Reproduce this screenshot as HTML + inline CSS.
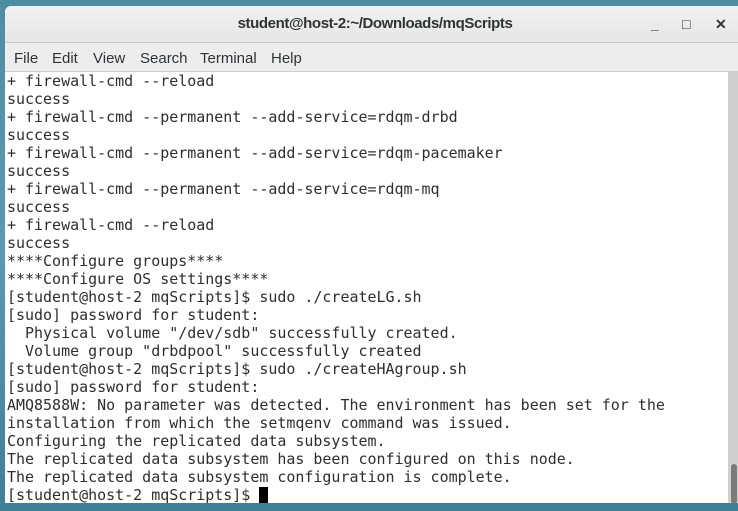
<!DOCTYPE html>
<html><head><style>
body{margin:0;width:738px;height:511px;overflow:hidden;background:linear-gradient(180deg,#4f8da3,#5a9ab0 50%,#3f7f96);font-family:"Liberation Sans",sans-serif;position:relative}
.win{position:absolute;left:5px;top:6px;width:740px;height:497px;background:#fff;border-radius:6px 6px 0 0;overflow:hidden}
.title{height:36px;background:linear-gradient(#f1f1f1,#e6e6e6);border-bottom:1px solid #c8c8c8;text-align:center;font-size:15px;line-height:36px;color:#2e3436;font-weight:bold;letter-spacing:-0.4px}
.b{position:absolute;top:0;line-height:36px;font-size:14px;color:#2e3436;font-weight:bold}
.menu{height:28px;background:#ededed;border-bottom:1px solid #d0d0d0;font-size:15px;line-height:32px;color:#2e3436;position:relative}
.menu span{position:absolute;top:0}
pre{margin:0;padding:0 0 0 2px;font-family:"DejaVu Sans Mono","Liberation Mono",monospace;font-size:14.98px;line-height:18px;color:#2e2e2e}
.sb{position:absolute;left:723px;top:65px;width:12px;height:432px;background:#cfcfcf}
.th{position:absolute;left:726px;top:458px;width:6px;height:40px;background:#7b7b7b;border-radius:3px}
.cur{display:inline-block;width:9px;height:16px;background:#000;vertical-align:-3px}
</style></head><body>
<div class="win">
<div class="title">student@host-2:~/Downloads/mqScripts</div>
<div class="b" style="left:646px">_</div><div class="b" style="left:677px">&#9633;</div><div class="b" style="left:710px">✕</div>
<div class="menu"><span style="left:9px">File</span><span style="left:47px">Edit</span><span style="left:88px">View</span><span style="left:135px">Search</span><span style="left:195px">Terminal</span><span style="left:266px">Help</span></div>
<pre>+ firewall-cmd --reload
success
+ firewall-cmd --permanent --add-service=rdqm-drbd
success
+ firewall-cmd --permanent --add-service=rdqm-pacemaker
success
+ firewall-cmd --permanent --add-service=rdqm-mq
success
+ firewall-cmd --reload
success
****Configure groups****
****Configure OS settings****
[student@host-2 mqScripts]$ sudo ./createLG.sh
[sudo] password for student:
  Physical volume "/dev/sdb" successfully created.
  Volume group "drbdpool" successfully created
[student@host-2 mqScripts]$ sudo ./createHAgroup.sh
[sudo] password for student:
AMQ8588W: No parameter was detected. The environment has been set for the
installation from which the setmqenv command was issued.
Configuring the replicated data subsystem.
The replicated data subsystem has been configured on this node.
The replicated data subsystem configuration is complete.
[student@host-2 mqScripts]$ <span class="cur"></span></pre>
<div class="sb"></div><div class="th"></div>
</div>
</body></html>
